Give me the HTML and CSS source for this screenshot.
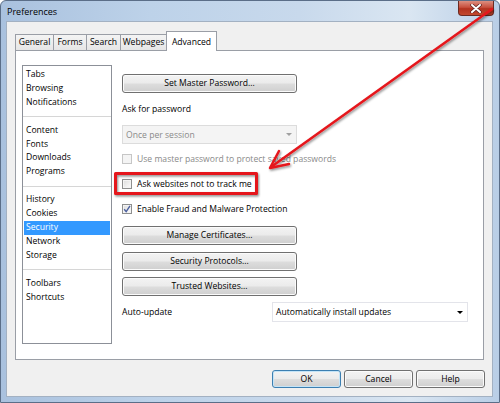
FILE: index.html
```html
<!DOCTYPE html>
<html lang="en">
<head>
    <meta charset="UTF-8">
    <title>Preferences</title>
    <link rel="stylesheet" href="styles.css">
</head>
<body>
    <div class="window">
        <div class="titlebar">
            <span class="title">Preferences</span>
            <div class="close">
                <svg width="12" height="9" viewBox="0 0 12 9">
                    <path d="M2 1 L10 8 M10 1 L2 8" stroke="#5a2020" stroke-width="3.4" stroke-linecap="round"/>
                    <path d="M2 1 L10 8 M10 1 L2 8" stroke="#fff" stroke-width="2" stroke-linecap="round"/>
                </svg>
            </div>
        </div>
        <div class="client">
            <div class="tabs">
                <div class="tab t-general">General</div>
                <div class="tab t-forms">Forms</div>
                <div class="tab t-search">Search</div>
                <div class="tab t-web">Webpages</div>
                <div class="tab t-adv selected">Advanced</div>
            </div>
            <div class="panel">
                <div class="sidebar">
                    <div class="item">Tabs</div>
                    <div class="item">Browsing</div>
                    <div class="item">Notifications</div>
                    <div class="sep"></div>
                    <div class="item">Content</div>
                    <div class="item">Fonts</div>
                    <div class="item">Downloads</div>
                    <div class="item">Programs</div>
                    <div class="sep"></div>
                    <div class="item">History</div>
                    <div class="item">Cookies</div>
                    <div class="item active">Security</div>
                    <div class="item">Network</div>
                    <div class="item">Storage</div>
                    <div class="sep"></div>
                    <div class="item">Toolbars</div>
                    <div class="item">Shortcuts</div>
                </div>
                <div class="content">
                    <div class="btn r-master">Set Master Password...</div>
                    <div class="row r-ask">Ask for password</div>
                    <div class="combo disabled r-combo">
                        <span>Once per session</span>
                        <span class="arrow"></span>
                    </div>
                    <div class="row r-use">
                        <span class="check disabled"></span>
                        <span class="gray">Use master password to protect saved passwords</span>
                    </div>
                    <div class="row r-track">
                        <span class="check"></span>
                        <span>Ask websites not to track me</span>
                    </div>
                    <div class="row r-fraud">
                        <span class="check">
                            <svg width="8" height="8" viewBox="0 0 8 8">
                                <path d="M1.2 4.2 L3.2 6.6 L7 0.8" stroke="#4b5f9e" stroke-width="1.4" fill="none"/>
                            </svg>
                        </span>
                        <span>Enable Fraud and Malware Protection</span>
                    </div>
                    <div class="btn r-cert">Manage Certificates...</div>
                    <div class="btn r-proto">Security Protocols...</div>
                    <div class="btn r-trust">Trusted Websites...</div>
                    <div class="row r-auto">
                        <span class="auto-label">Auto-update</span>
                        <div class="combo wide">
                            <span>Automatically install updates</span>
                            <span class="arrow"></span>
                        </div>
                    </div>
                </div>
            </div>
            <div class="footer">
                <div class="btn small default">OK</div>
                <div class="btn small">Cancel</div>
                <div class="btn small">Help</div>
            </div>
        </div>
    </div>

    <svg class="overlay" width="500" height="403" viewBox="0 0 500 403">
        <defs>
            <filter id="shadow" x="-20%" y="-20%" width="140%" height="140%">
                <feDropShadow dx="1" dy="1.5" stdDeviation="1" flood-color="#000" flood-opacity="0.45"/>
            </filter>
        </defs>
        <g filter="url(#shadow)" stroke="#e5161b" fill="none" stroke-linecap="round" stroke-linejoin="round">
            <rect x="115.5" y="173.5" width="141" height="20" stroke-width="3"/>
            <line x1="492" y1="9" x2="271" y2="167" stroke-width="2.5"/>
            <polyline points="289,164 270,168 279,151" stroke-width="2.5"/>
        </g>
    </svg>
</body>
</html>
```

FILE: styles.css
```css
*{
    box-sizing: border-box;
}
body{
    margin: 0;
    width: 500px;
    height: 403px;
    overflow: hidden;
    position: relative;
    font-family: "Open Sans", "Noto Sans", sans-serif;
    font-size: 8.6px;
    color: #000;
    background: #fff;
}
.window{
    width: 500px;
    height: 403px;
    border: 1px solid #5b6e88;
    border-radius: 6px 6px 0 0;
    background: linear-gradient(to right, #a9c1de 0%, #bdd2e9 30%, #c8d9ec 60%, #dae6f2 82%, #b9cee6 100%);
}
.titlebar{
    height: 20px;
    display: flex;
    align-items: flex-start;
}
.title{
    margin-left: 6px;
    line-height: 22px;
    font-size: 9px;
}
.close{
    margin-left: auto;
    margin-right: 5px;
    width: 36px;
    height: 15px;
    border: 1px solid #6b2a22;
    border-top: none;
    border-radius: 0 0 4px 4px;
    background: linear-gradient(#dc8f80 0%, #c8503e 45%, #b2321f 55%, #c2482f 100%);
    display: flex;
    align-items: center;
    justify-content: center;
}
.client{
    margin: 0 6px 0 5px;
    height: 376px;
    border: 1px solid #a3b1c2;
    background: #f0f0f0;
    padding-top: 9px;
}
.tabs{
    display: flex;
    align-items: flex-end;
    height: 19px;
    padding-left: 8px;
    position: relative;
    z-index: 2;
}
.tab{
    height: 16px;
    border: 1px solid #9a9ea6;
    border-bottom: none;
    margin-right: -1px;
    background: linear-gradient(#f4f4f4, #e6e6e6);
    text-align: center;
    line-height: 15px;
}
.tab.selected{
    height: 20px;
    margin-bottom: -1px;
    background: #fff;
    line-height: 21px;
}
.t-general{ width: 39px; }
.t-forms{ width: 34px; }
.t-search{ width: 35px; }
.t-web{ width: 47px; }
.t-adv{ width: 51px; }
.panel{
    margin: 0 8px 0 8px;
    height: 310px;
    border: 1px solid #9a9ea6;
    background: #fff;
    display: flex;
    align-items: flex-start;
    padding: 14px 0 0 6px;
    position: relative;
    z-index: 1;
}
.sidebar{
    width: 90px;
    height: 279px;
    border: 1px solid #8c9098;
    padding: 2px 1px 1px 1px;
}
.item{
    line-height: 13.9px;
    height: 13.9px;
    padding-left: 2px;
    white-space: nowrap;
}
.item.active{
    background: #3399ff;
    color: #fff;
}
.sep{
    height: 1px;
    background: #d6d6d6;
    margin: 6.5px -1px;
}
.content{
    margin-left: 10px;
    width: 350px;
}
.btn{
    width: 175px;
    height: 19px;
    border: 1px solid #707070;
    border-radius: 3px;
    background: linear-gradient(#f3f3f3 0%, #ebebeb 48%, #dddddd 52%, #cfcfcf 100%);
    box-shadow: inset 0 0 0 1px #fbfbfb;
    text-align: center;
    line-height: 17px;
}
.row{
    height: 14px;
    display: flex;
    align-items: center;
    white-space: nowrap;
}
.r-master{ margin-top: 9px; }
.r-ask{ margin-top: 9px; }
.r-combo{ margin-top: 9px; }
.r-use{ margin-top: 8px; }
.r-track{ margin-top: 11px; }
.r-fraud{ margin-top: 11px; }
.r-cert{ margin-top: 10px; }
.r-proto{ margin-top: 7px; }
.r-trust{ margin-top: 6px; }
.r-auto{ margin-top: 6px; height: 20px; }
.combo{
    width: 175px;
    height: 19px;
    border: 1px solid #dcdcdc;
    background: #fff;
    display: flex;
    align-items: center;
    justify-content: space-between;
    padding: 0 4px 0 3px;
}
.combo.disabled{
    background: #f4f4f4;
    color: #8a8a8a;
}
.combo.wide{
    width: 196px;
    height: 20px;
    border-color: #e3e4ea;
}
.arrow{
    width: 0;
    height: 0;
    border-left: 3px solid transparent;
    border-right: 3px solid transparent;
    border-top: 3px solid #000;
}
.combo.disabled .arrow{
    border-top-color: #a0a0a0;
}
.check{
    width: 10px;
    height: 10px;
    border: 1px solid #8e8f8f;
    background: linear-gradient(135deg, #dcdcdc, #fdfdfd);
    box-shadow: inset 0 0 0 1px #f4f4f4;
    margin-right: 5px;
    display: flex;
    align-items: center;
    justify-content: center;
}
.check.disabled{
    border-color: #c6c6c6;
    background: #f4f4f4;
}
.gray{
    color: #8a8a8a;
}
.auto-label{
    width: 150px;
}
.footer{
    display: flex;
    justify-content: flex-end;
    gap: 3px;
    margin-top: 10px;
    padding-right: 7px;
}
.btn.small{
    width: 69px;
    height: 18px;
    line-height: 16px;
}
.btn.default{
    border-color: #3c7fb1;
    box-shadow: inset 0 0 0 1px #c4e4f7;
}
.overlay{
    position: absolute;
    left: 0;
    top: 0;
    z-index: 10;
    pointer-events: none;
}
```
